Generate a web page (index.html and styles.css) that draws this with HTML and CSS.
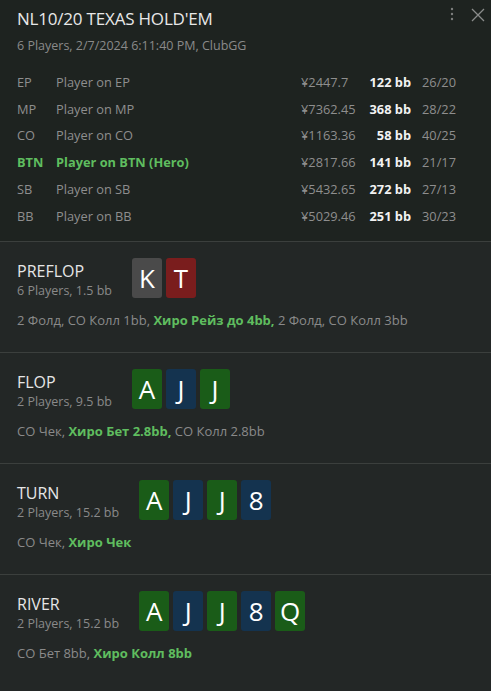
FILE: index.html
```html
<!DOCTYPE html>
<html>
<head>
<meta charset="utf-8">
<link rel="stylesheet" href="styles.css">
</head>
<body>
<div class="panel">
  <header class="header">
    <div class="tools">
      <svg class="dots" width="6" height="16" viewBox="0 0 6 16"><circle cx="3" cy="3" r="1.2"/><circle cx="3" cy="8" r="1.2"/><circle cx="3" cy="13" r="1.2"/></svg>
      <svg class="close" width="14" height="14" viewBox="0 0 14 14"><path d="M1 1 L13 13 M13 1 L1 13"/></svg>
    </div>
    <div class="title">NL10/20 TEXAS HOLD'EM</div>
    <div class="subtitle">6 Players, 2/7/2024 6:11:40 PM, ClubGG</div>
    <div class="players">
      <div class="row"><span class="pos">EP</span><span class="name">Player on EP</span><span class="amt">¥2447.7</span><span class="bb">122 bb</span><span class="stat">26/20</span></div>
      <div class="row"><span class="pos">MP</span><span class="name">Player on MP</span><span class="amt">¥7362.45</span><span class="bb">368 bb</span><span class="stat">28/22</span></div>
      <div class="row"><span class="pos">CO</span><span class="name">Player on CO</span><span class="amt">¥1163.36</span><span class="bb">58 bb</span><span class="stat">40/25</span></div>
      <div class="row hero"><span class="pos">BTN</span><span class="name">Player on BTN (Hero)</span><span class="amt">¥2817.66</span><span class="bb">141 bb</span><span class="stat">21/17</span></div>
      <div class="row"><span class="pos">SB</span><span class="name">Player on SB</span><span class="amt">¥5432.65</span><span class="bb">272 bb</span><span class="stat">27/13</span></div>
      <div class="row"><span class="pos">BB</span><span class="name">Player on BB</span><span class="amt">¥5029.46</span><span class="bb">251 bb</span><span class="stat">30/23</span></div>
    </div>
  </header>

  <section class="street">
    <div class="street-head">
      <div class="street-info">
        <div class="street-name">PREFLOP</div>
        <div class="street-sub">6 Players, 1.5 bb</div>
      </div>
      <div class="cards">
        <span class="card grey">K</span><span class="card red">T</span>
      </div>
    </div>
    <div class="actions">2 Фолд, CO Колл 1bb, <b class="hl">Хиро Рейз до 4bb,</b> 2 Фолд, CO Колл 3bb</div>
  </section>

  <section class="street">
    <div class="street-head">
      <div class="street-info">
        <div class="street-name">FLOP</div>
        <div class="street-sub">2 Players, 9.5 bb</div>
      </div>
      <div class="cards">
        <span class="card green">A</span><span class="card blue">J</span><span class="card green">J</span>
      </div>
    </div>
    <div class="actions">CO Чек, <b class="hl">Хиро Бет 2.8bb,</b> CO Колл 2.8bb</div>
  </section>

  <section class="street">
    <div class="street-head">
      <div class="street-info">
        <div class="street-name">TURN</div>
        <div class="street-sub">2 Players, 15.2 bb</div>
      </div>
      <div class="cards">
        <span class="card green">A</span><span class="card blue">J</span><span class="card green">J</span><span class="card blue">8</span>
      </div>
    </div>
    <div class="actions">CO Чек, <b class="hl">Хиро Чек</b></div>
  </section>

  <section class="street last">
    <div class="street-head">
      <div class="street-info">
        <div class="street-name">RIVER</div>
        <div class="street-sub">2 Players, 15.2 bb</div>
      </div>
      <div class="cards">
        <span class="card green">A</span><span class="card blue">J</span><span class="card green">J</span><span class="card blue">8</span><span class="card green">Q</span>
      </div>
    </div>
    <div class="actions">CO Бет 8bb, <b class="hl">Хиро Колл 8bb</b></div>
  </section>
  <div class="footer"></div>
</div>
</body>
</html>
```

FILE: styles.css
```css
html, body {
  margin: 0;
  padding: 0;
  background: #1c201e;
}
body {
  font-family: "Open Sans", "Noto Sans", sans-serif;
  color: #8e8e8e;
  width: 491px;
  height: 691px;
  overflow: hidden;
}
.panel {
  display: flex;
  flex-direction: column;
}
.header {
  position: relative;
  background: #1e2320;
  padding: 7px 17px 12px 17px;
  border-bottom: 1px solid #3b3f3d;
}
.tools {
  position: absolute;
  top: 5px;
  right: 6px;
  display: flex;
  align-items: center;
  gap: 16px;
}
.dots { fill: #7d7f7e; }
.close { stroke: #8a8c8b; stroke-width: 1.3; fill: none; margin-top: 3px; }
.title {
  font-size: 17px;
  line-height: 24px;
  color: #e8e8e8;
  letter-spacing: -0.2px;
}
.subtitle {
  font-size: 12.5px;
  line-height: 20px;
  color: #8a8a8a;
  margin-top: 5px;
  margin-bottom: 13px;
}
.players {
  display: flex;
  flex-direction: column;
}
.row {
  display: grid;
  grid-template-columns: 39px 245px 56px 54px auto;
  font-size: 12.8px;
  line-height: 26.7px;
  white-space: nowrap;
}
.row .bb {
  text-align: right;
  color: #f2f2f2;
  font-weight: 700;
}
.row .stat { padding-left: 11px; }
.row.hero .pos, .row.hero .name {
  color: #5fbd5f;
  font-weight: 700;
}
.street {
  background: #232726;
  padding: 16px 17px 22px 17px;
  border-bottom: 1px solid #3b3f3d;
}
.street.last { border-bottom: none; padding-bottom: 34px; }
.street-head {
  display: flex;
  align-items: flex-start;
  gap: 20px;
}
.street-info { padding-top: 3px; }
.street-name {
  font-size: 16px;
  line-height: 20px;
  color: #e6e6e6;
}
.street-sub {
  font-size: 12.5px;
  line-height: 20px;
  color: #8a8a8a;
}
.cards {
  display: flex;
  gap: 4px;
}
.card {
  width: 30px;
  height: 40px;
  border-radius: 3px;
  color: #ffffff;
  font-size: 26px;
  line-height: 40px;
  text-align: center;
}
.card.grey { background: #4a4a4a; }
.card.red { background: #7a1d1d; }
.card.green { background: #1a5c18; }
.card.blue { background: #14334f; }
.actions {
  margin-top: 9px;
  font-size: 13px;
  line-height: 20px;
  color: #8a8a8a;
  white-space: nowrap;
}
.hl { color: #5fbd5f; font-weight: 700; }
.footer {
  height: 6px;
  background: #1c1f1e;
}
```
